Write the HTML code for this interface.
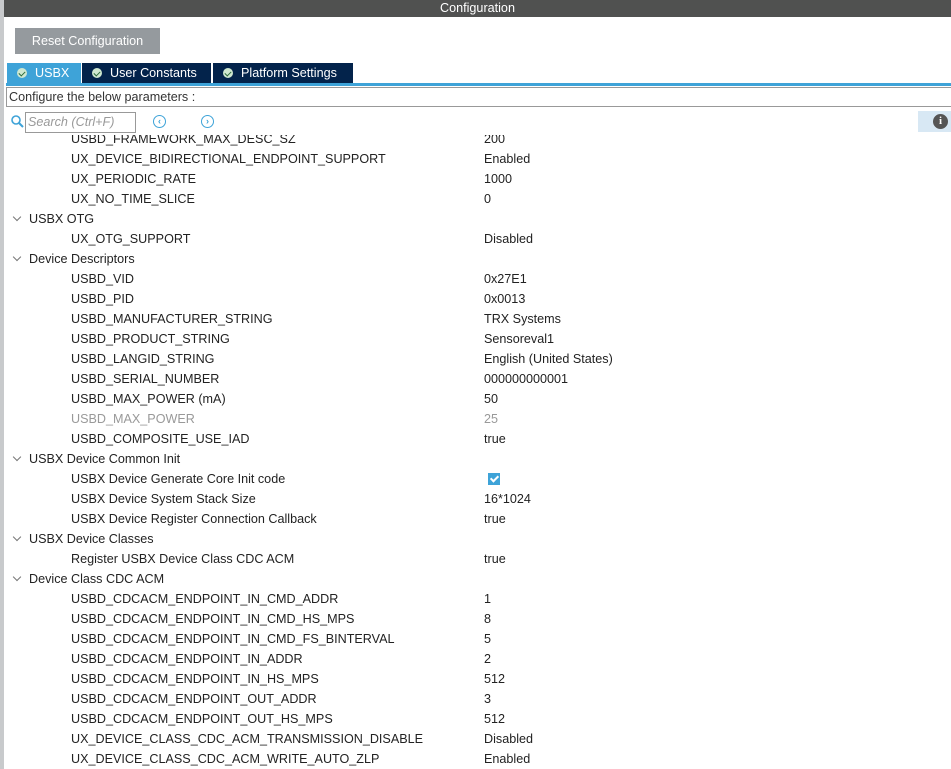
<!DOCTYPE html>
<html><head><meta charset="utf-8"><style>
*{margin:0;padding:0;box-sizing:border-box}
body{width:951px;height:769px;overflow:hidden;background:#fff;font-family:"Liberation Sans",sans-serif;font-size:12.6px;color:#222;position:relative}
.strip{position:absolute;left:0;top:0;width:4px;height:769px;background:#c8cacc}
.title{position:absolute;left:4px;top:0;right:0;height:17px;background:#505150;color:#fff;text-align:center;font-size:12.6px;line-height:17px}
.reset{position:absolute;left:15px;top:28px;width:145px;height:26px;background:#959a9e;color:#fff;font-size:12.6px;line-height:26px;text-align:center}
.tab{position:absolute;top:63px;height:20px;color:#fff;font-size:12.6px;line-height:20px;padding-left:10px}
.tab i{display:inline-block;width:10px;height:10px;border-radius:50%;background:#cfe8d0;margin-right:8px;vertical-align:-1px;position:relative}
.tab i:after{content:"";position:absolute;left:3px;top:2px;width:3px;height:5px;border:solid #2a6a3a;border-width:0 1.5px 1.5px 0;transform:rotate(45deg)}
.line{position:absolute;left:6px;right:0;top:83px;height:3px;background:#3ea3d8}
.cfg{position:absolute;left:6px;right:0;top:87px;height:20px;border:1px solid #999;border-right:none;line-height:18px;padding-left:2px;color:#333}
.search{position:absolute;left:25px;top:112px;width:111px;height:21px;border:1px solid #999;color:#999;font-style:italic;line-height:19px;padding-left:2px}
.circ{position:absolute;top:115px;width:13px;height:13px;border:1.5px solid #3ea3d8;border-radius:50%;color:#3ea3d8;font-size:9px;line-height:10px;text-align:center;font-weight:bold}
.info{position:absolute;left:918px;top:111px;width:33px;height:21px;background:#d8e8f4}
.info b{position:absolute;left:15px;top:3px;width:15px;height:15px;border-radius:50%;background:#555;color:#fff;font-size:11px;line-height:15px;text-align:center;font-family:"Liberation Serif",serif}
.list{position:absolute;left:4px;top:135px;width:947px;height:634px;overflow:hidden}
.in{position:absolute;left:0;top:-1px;width:100%;height:634px;overflow:hidden}
.row{position:absolute;left:0;height:20px;line-height:20px;width:100%}
.row .k{position:absolute;left:67px}
.row .v{position:absolute;left:480px}
.row .g{position:absolute;left:25px}
.row .c{position:absolute;left:10px;top:5px;width:6px;height:6px;border:solid #777;border-width:0 1px 1px 0;transform:rotate(45deg)}
.dis{color:#999}
.chk{display:inline-block;width:12px;height:12px;background:#3ea3d8;position:relative;vertical-align:-2px}
.chk:after{content:"";position:absolute;left:4px;top:1px;width:3px;height:6px;border:solid #fff;border-width:0 2px 2px 0;transform:rotate(45deg)}
</style></head><body>
<div class="strip"></div>
<div class="title">Configuration</div>
<div class="reset">Reset Configuration</div>
<div class="tab" style="left:7px;width:74px;background:#3ea3d8"><i></i>USBX</div>
<div class="tab" style="left:82px;width:129px;background:#03234b"><i></i>User Constants</div>
<div class="tab" style="left:213px;width:140px;background:#03234b"><i></i>Platform Settings</div>
<div class="line"></div>
<div class="cfg">Configure the below parameters :</div>
<svg style="position:absolute;left:11px;top:115px" width="13" height="13"><circle cx="5" cy="5" r="4" fill="none" stroke="#3ea3d8" stroke-width="1.6"/><line x1="8" y1="8" x2="12" y2="12" stroke="#3ea3d8" stroke-width="2"/></svg>
<div class="search">Search (Ctrl+F)</div>
<div class="circ" style="left:153px">‹</div>
<div class="circ" style="left:201px">›</div>
<div class="info"><b>i</b></div>
<div class="list"><div class="in">
<div class="row" style="top:-5px"><span class="k">USBD_FRAMEWORK_MAX_DESC_SZ</span><span class="v">200</span></div>
<div class="row" style="top:15px"><span class="k">UX_DEVICE_BIDIRECTIONAL_ENDPOINT_SUPPORT</span><span class="v">Enabled</span></div>
<div class="row" style="top:35px"><span class="k">UX_PERIODIC_RATE</span><span class="v">1000</span></div>
<div class="row" style="top:55px"><span class="k">UX_NO_TIME_SLICE</span><span class="v">0</span></div>
<div class="row" style="top:75px"><span class="c"></span><span class="g">USBX OTG</span></div>
<div class="row" style="top:95px"><span class="k">UX_OTG_SUPPORT</span><span class="v">Disabled</span></div>
<div class="row" style="top:115px"><span class="c"></span><span class="g">Device Descriptors</span></div>
<div class="row" style="top:135px"><span class="k">USBD_VID</span><span class="v">0x27E1</span></div>
<div class="row" style="top:155px"><span class="k">USBD_PID</span><span class="v">0x0013</span></div>
<div class="row" style="top:175px"><span class="k">USBD_MANUFACTURER_STRING</span><span class="v">TRX Systems</span></div>
<div class="row" style="top:195px"><span class="k">USBD_PRODUCT_STRING</span><span class="v">Sensoreval1</span></div>
<div class="row" style="top:215px"><span class="k">USBD_LANGID_STRING</span><span class="v">English (United States)</span></div>
<div class="row" style="top:235px"><span class="k">USBD_SERIAL_NUMBER</span><span class="v">000000000001</span></div>
<div class="row" style="top:255px"><span class="k">USBD_MAX_POWER (mA)</span><span class="v">50</span></div>
<div class="row dis" style="top:275px"><span class="k">USBD_MAX_POWER</span><span class="v">25</span></div>
<div class="row" style="top:295px"><span class="k">USBD_COMPOSITE_USE_IAD</span><span class="v">true</span></div>
<div class="row" style="top:315px"><span class="c"></span><span class="g">USBX Device Common Init</span></div>
<div class="row" style="top:335px"><span class="k">USBX Device Generate Core Init code</span><span class="v" style="left:484px"><span class="chk"></span></span></div>
<div class="row" style="top:355px"><span class="k">USBX Device System Stack Size</span><span class="v">16*1024</span></div>
<div class="row" style="top:375px"><span class="k">USBX Device Register Connection Callback</span><span class="v">true</span></div>
<div class="row" style="top:395px"><span class="c"></span><span class="g">USBX Device Classes</span></div>
<div class="row" style="top:415px"><span class="k">Register USBX Device Class CDC ACM</span><span class="v">true</span></div>
<div class="row" style="top:435px"><span class="c"></span><span class="g">Device Class CDC ACM</span></div>
<div class="row" style="top:455px"><span class="k">USBD_CDCACM_ENDPOINT_IN_CMD_ADDR</span><span class="v">1</span></div>
<div class="row" style="top:475px"><span class="k">USBD_CDCACM_ENDPOINT_IN_CMD_HS_MPS</span><span class="v">8</span></div>
<div class="row" style="top:495px"><span class="k">USBD_CDCACM_ENDPOINT_IN_CMD_FS_BINTERVAL</span><span class="v">5</span></div>
<div class="row" style="top:515px"><span class="k">USBD_CDCACM_ENDPOINT_IN_ADDR</span><span class="v">2</span></div>
<div class="row" style="top:535px"><span class="k">USBD_CDCACM_ENDPOINT_IN_HS_MPS</span><span class="v">512</span></div>
<div class="row" style="top:555px"><span class="k">USBD_CDCACM_ENDPOINT_OUT_ADDR</span><span class="v">3</span></div>
<div class="row" style="top:575px"><span class="k">USBD_CDCACM_ENDPOINT_OUT_HS_MPS</span><span class="v">512</span></div>
<div class="row" style="top:595px"><span class="k">UX_DEVICE_CLASS_CDC_ACM_TRANSMISSION_DISABLE</span><span class="v">Disabled</span></div>
<div class="row" style="top:615px"><span class="k">UX_DEVICE_CLASS_CDC_ACM_WRITE_AUTO_ZLP</span><span class="v">Enabled</span></div>
</div></div>
</body></html>
